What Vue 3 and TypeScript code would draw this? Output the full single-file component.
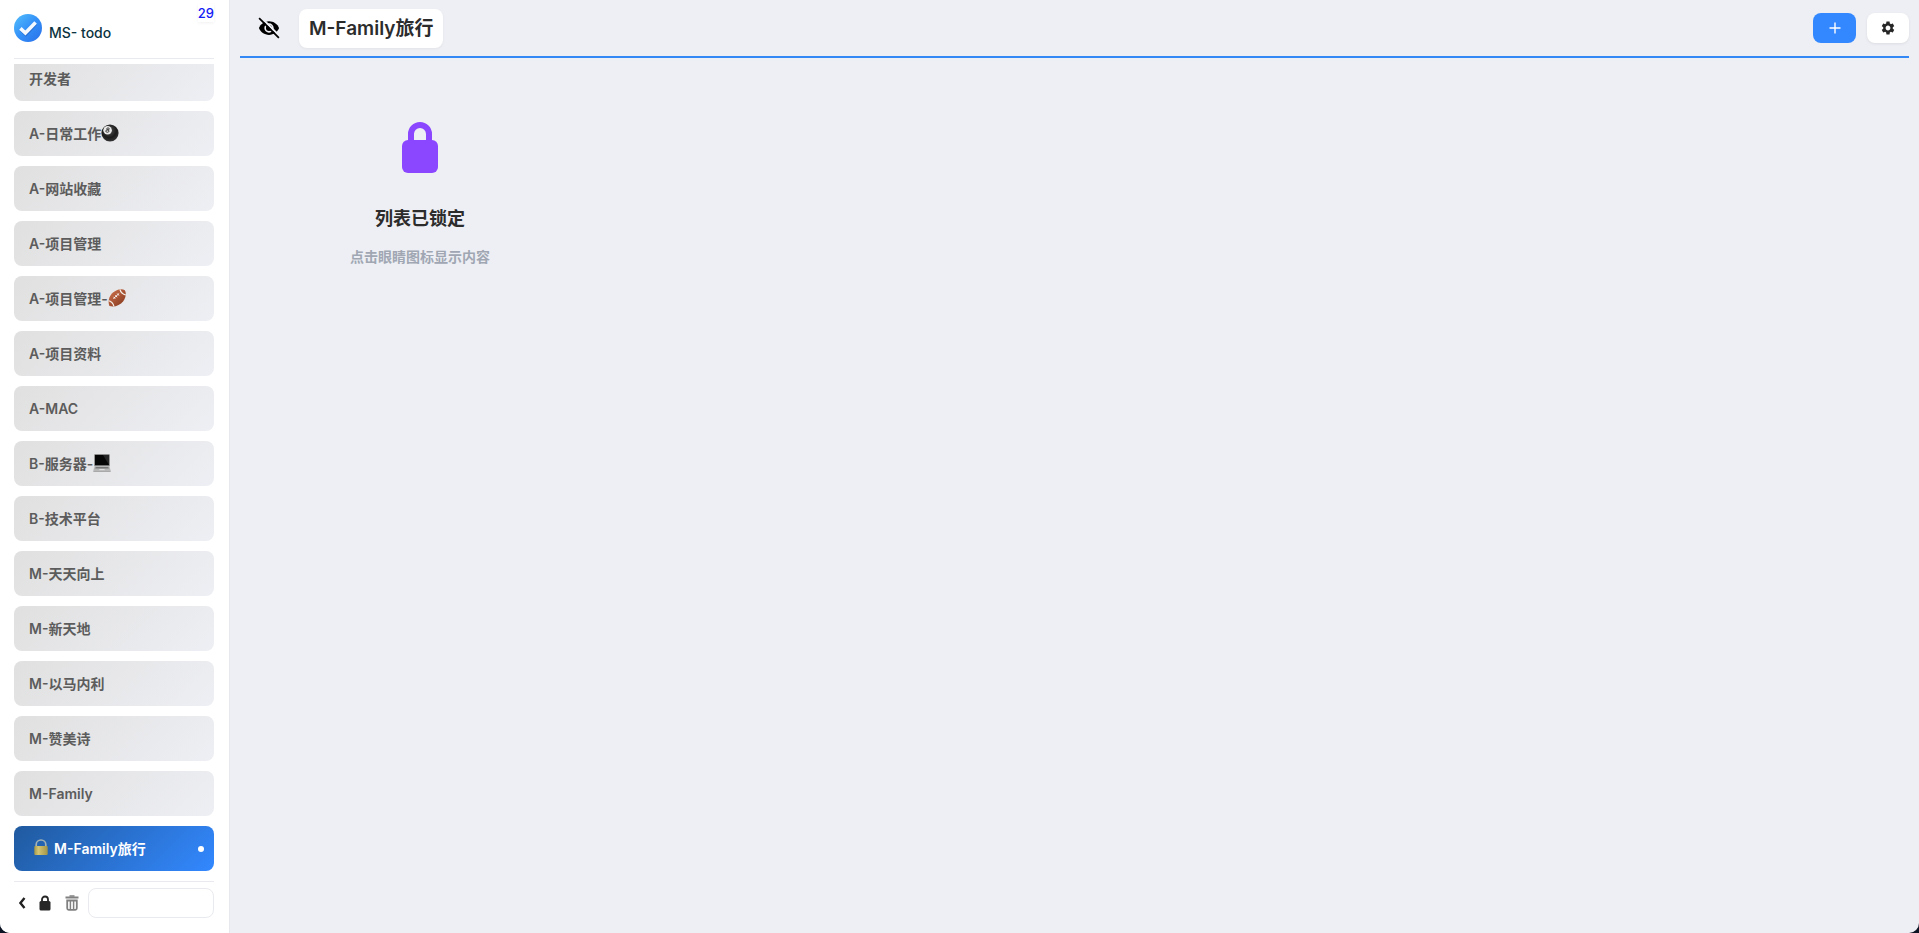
<script setup lang="ts">
import { ref } from 'vue'

interface TodoList {
  name: string
  emoji?: 'ball' | 'football' | 'laptop'
  locked?: boolean
}

const lists: TodoList[] = [
  { name: '开发者' },
  { name: 'A-日常工作', emoji: 'ball' },
  { name: 'A-网站收藏' },
  { name: 'A-项目管理' },
  { name: 'A-项目管理-', emoji: 'football' },
  { name: 'A-项目资料' },
  { name: 'A-MAC' },
  { name: 'B-服务器-', emoji: 'laptop' },
  { name: 'B-技术平台' },
  { name: 'M-天天向上' },
  { name: 'M-新天地' },
  { name: 'M-以马内利' },
  { name: 'M-赞美诗' },
  { name: 'M-Family' },
  { name: 'M-Family旅行', locked: true },
]
const active = ref(lists.length - 1)
const newName = ref('')
</script>

<template>
  <div class="app">
    <aside class="sidebar">
      <header class="brand">
        <svg class="logo" viewBox="0 0 28 28" aria-hidden="true">
          <defs>
            <linearGradient id="logoFill" x1="0" y1="0" x2="1" y2="1">
              <stop offset="0" stop-color="#55c0fb" />
              <stop offset="0.5" stop-color="#3390f8" />
              <stop offset="1" stop-color="#2a6fe8" />
            </linearGradient>
          </defs>
          <circle cx="14" cy="14" r="14" fill="url(#logoFill)" />
          <path d="M7 15.6l4.8 4.6L21.8 9.6" fill="none" stroke="#1c56b4" stroke-opacity=".55" stroke-width="3.6" />
          <path d="M6.400 14.400l5 4.600L21.600 8.400" fill="none" stroke="#f4f8ff" stroke-width="3.6" />
        </svg>
        <span class="brand-name">MS- todo</span>
        <span class="count">29</span>
      </header>

      <nav class="lists">
        <button
          v-for="(item, i) in lists"
          :key="item.name"
          type="button"
          class="list-item"
          :class="{ active: i === active }"
          @click="active = i"
        >
          <svg v-if="item.locked" class="lock-emoji" viewBox="0 0 14 17" aria-hidden="true">
            <defs>
              <linearGradient id="brass" x1="0" x2="1">
                <stop offset="0" stop-color="#a59848" />
                <stop offset="0.3" stop-color="#d3c574" />
                <stop offset="1" stop-color="#a39546" />
              </linearGradient>
            </defs>
            <path d="M2.2 8V5.4a4.8 4.4 0 0 1 9.6 0V8" fill="none" stroke="#a3b2b4" stroke-width="1.7" />
            <rect x=".3" y="7" width="13.4" height="9" rx="1" fill="url(#brass)" />
          </svg>
          <span>{{ item.name }}</span>
          <svg v-if="item.emoji === 'ball'" class="emoji" viewBox="0 0 18 18" aria-hidden="true">
            <defs>
              <radialGradient id="ballFill" cx=".45" cy=".35" r=".7">
                <stop offset="0" stop-color="#555" />
                <stop offset="0.6" stop-color="#1c1c1c" />
                <stop offset="1" stop-color="#3b3b3b" />
              </radialGradient>
            </defs>
            <circle cx="9" cy="9" r="8.6" fill="url(#ballFill)" />
            <circle cx="6.6" cy="6.2" r="4.300" fill="#e8e8e8" />
            <ellipse cx="7" cy="4.900" rx="1.300" ry="1" fill="none" stroke="#333" stroke-width=".9" />
            <ellipse cx="6.400" cy="7.100" rx="1.600" ry="1.200" fill="none" stroke="#333" stroke-width=".9" />
          </svg>
          <svg v-else-if="item.emoji === 'football'" class="emoji" viewBox="0 0 18 18" aria-hidden="true">
            <defs>
              <linearGradient id="leather" x1="0" y1="0" x2="1" y2="1">
                <stop offset="0" stop-color="#d27650" />
                <stop offset="1" stop-color="#80341a" />
              </linearGradient>
              <clipPath id="ballShape">
                <path d="M1.400 17C-1 11 2.200 5 6.500 2.400 10.500 0 14.500-.2 16.800 1.200 18.600 4 18 8.500 15.200 12.200 12 16.400 6.500 18.400 1.400 17z" />
              </clipPath>
            </defs>
            <g clip-path="url(#ballShape)">
              <path d="M0 0h18v18H0z" fill="url(#leather)" />
              <path d="M-.2 11.600c3 .4 5.400 2.600 6.200 6M11.800.2c.8 3 3 5.200 6.200 5.800" fill="none" stroke="#f3ece4" stroke-width="1.300" />
            </g>
            <path d="M5.400 9.600l5.800-5.200M5.500 7.800l1.700 2M7.400 6.200l1.700 2M9.200 4.500l1.700 2" fill="none" stroke="#fff" stroke-width=".9" />
          </svg>
          <svg v-else-if="item.emoji === 'laptop'" class="emoji" viewBox="0 0 18 18" aria-hidden="true">
            <rect x="1.300" y=".3" width="15.400" height="11.700" rx=".6" fill="#727272" />
            <rect x="2" y="1" width="14" height="10" fill="#060606" />
            <path d="M10 1h6v10z" fill="#252525" />
            <path d="M1.600 12h14.800l1.300 4.800H.3z" fill="#b6b6b6" />
            <path d="M2.700 12.900h12.600l.5 1.600H2.200z" fill="#777" />
            <path d="M6.500 15h5l.3 1.200H6.200z" fill="#ddd" />
            <path d="M.3 16.800h17.400v.9H.3z" fill="#8f8f8f" />
          </svg>
          <i v-if="i === active" class="dot"></i>
        </button>
      </nav>

      <footer class="tools">
        <button type="button" class="tool back" aria-label="收起">
          <svg viewBox="0 0 8 12"><path d="M6.500 1L2.400 6l4.100 5" fill="none" stroke="#222" stroke-width="2.400" /></svg>
        </button>
        <button type="button" class="tool lock" aria-label="锁定">
          <svg viewBox="0 0 12 16">
            <path d="M3 7V4.500a3 3 0 0 1 6 0V7" fill="none" stroke="#262626" stroke-width="1.800" />
            <rect x=".5" y="6" width="11" height="9.500" rx="1.500" fill="#262626" />
          </svg>
        </button>
        <button type="button" class="tool trash" aria-label="删除">
          <svg viewBox="0 0 14 16" fill="none" stroke="#808080">
            <path d="M.5 2.500h13" stroke-width="1.800" />
            <path d="M4.500 1h5" stroke-width="1.600" />
            <path d="M2.200 5.500v7.800q0 1.500 1.500 1.500h6.600q1.500 0 1.500-1.500V5.500z" stroke-width="1.800" />
            <path d="M5.400 5v9M8.600 5v9" stroke-width="1.500" />
          </svg>
        </button>
        <input v-model="newName" class="new-list" type="text" aria-label="新建列表" />
      </footer>
    </aside>

    <main class="main">
      <header class="topbar">
        <button type="button" class="eye" aria-label="显示内容">
          <svg viewBox="0 0 24 24">
            <path d="M12 4.500C7 4.500 2.700 7.600 1 12c1.700 4.400 6 7.500 11 7.500s9.300-3.100 11-7.500c-1.700-4.400-6-7.500-11-7.500z" fill="#000" />
            <circle cx="12" cy="12" r="4.200" fill="none" stroke="#eeeff4" stroke-width="1.800" />
            <path d="M3.700.900l20.400 20.400" stroke="#eeeff4" stroke-width="2.200" />
            <path d="M1.200 1.200l21.600 21.600" stroke="#000" stroke-width="1.900" />
          </svg>
        </button>
        <h1 class="title">M-Family旅行</h1>
        <button type="button" class="add" aria-label="添加">
          <svg viewBox="0 0 12 12"><path d="M6 .5v11M.5 6h11" stroke="#fff" stroke-width="1.400" /></svg>
        </button>
        <button type="button" class="settings" aria-label="设置">
          <svg viewBox="0 0 24 24">
            <path fill="#262626" d="M19.140 12.940c.04-.3.060-.61.060-.94s-.02-.64-.07-.94l2.030-1.580c.18-.14.230-.41.120-.61l-1.920-3.320c-.12-.22-.37-.29-.59-.22l-2.390.96c-.5-.38-1.030-.7-1.620-.94l-.36-2.540c-.04-.24-.24-.41-.48-.41h-3.840c-.24 0-.43.170-.47.410l-.36 2.540c-.59.240-1.130.570-1.620.940l-2.390-.96c-.22-.08-.47 0-.59.220L2.740 8.870c-.12.210-.08.470.12.610l2.030 1.580c-.05.3-.09.630-.09.940s.02.640.07.940l-2.030 1.580c-.18.140-.23.410-.12.610l1.920 3.320c.12.220.37.290.59.220l2.390-.96c.5.380 1.030.7 1.620.940l.36 2.540c.05.240.24.410.48.410h3.840c.24 0 .44-.17.470-.41l.36-2.540c.59-.24 1.130-.56 1.620-.94l2.390.96c.22.080.47 0 .59-.22l1.920-3.320c.12-.22.070-.47-.12-.61l-2.010-1.580zM12 15.600c-1.980 0-3.600-1.620-3.600-3.600s1.620-3.600 3.600-3.600 3.600 1.620 3.600 3.600-1.620 3.600-3.600 3.600z" />
          </svg>
        </button>
      </header>

      <section class="locked">
        <svg class="locked-icon" viewBox="0 0 36 51" aria-hidden="true">
          <path d="M9 20V12a9 9 0 0 1 18 0v8" fill="none" stroke="#8b46ff" stroke-width="6" />
          <rect y="18" width="36" height="33" rx="6" fill="#8b46ff" />
        </svg>
        <h2>列表已锁定</h2>
        <p>点击眼睛图标显示内容</p>
      </section>
    </main>
  </div>
</template>

<style>
body {
  background: #0c1322;
}
</style>

<style scoped>
.app {
  display: flex;
  height: 100vh;
  overflow: hidden;
  border-radius: 0 0 10px 10px;
  background: #eeeff4;
  font-family: Inter, "Noto Sans CJK SC", sans-serif;
  font-size: 14px;
}

button {
  padding: 0;
  border: 0;
  background: none;
  font: inherit;
  cursor: pointer;
}

svg {
  display: block;
}

.sidebar {
  display: flex;
  flex-direction: column;
  box-sizing: border-box;
  flex: 0 0 230px;
  min-width: 0;
  padding: 0 15px 15px 14px;
  border-right: 1px solid #e6e8ed;
  background: #fff;
}

.brand {
  display: flex;
  flex: 0 0 58px;
  gap: 7px;
  border-bottom: 1px solid #e9eaef;
}

.logo {
  width: 28px;
  height: 28px;
  margin-top: 14px;
}

.brand-name {
  margin-top: 24px;
  line-height: 18px;
  font-weight: 500;
  color: #0c3440;
}

.count {
  margin: 4px 0 auto auto;
  line-height: 18px;
  font-size: 13px;
  font-weight: 500;
  color: #1420f5;
  box-shadow: 0 1px 3px rgba(0, 0, 0, 0.06);
}

.lists {
  display: flex;
  flex: 1;
  flex-direction: column;
  justify-content: flex-end;
  gap: 10px;
  min-height: 0;
  margin: 5px 0 10px;
  overflow: hidden;
}

.list-item {
  display: flex;
  flex: 0 0 45px;
  align-items: center;
  padding: 0 10px 0 15px;
  border-radius: 8px;
  background: linear-gradient(135deg, #e0e0e0, #eeeff4);
  line-height: 18px;
  font-weight: 600;
  color: #5c5c5c;
}

.list-item.active {
  background: linear-gradient(135deg, #205a9f, #3388ff);
  color: #fff;
}

.emoji {
  width: 18px;
  height: 18px;
  margin-bottom: 2px;
}

.lock-emoji {
  width: 14px;
  height: 17px;
  margin: 0 6px 2px 5px;
}

.dot {
  width: 6px;
  height: 6px;
  margin-left: auto;
  border-radius: 50%;
  background: #fff;
}

.tools {
  display: flex;
  align-items: center;
  padding-top: 6px;
  border-top: 1px solid #e9eaef;
}

.back {
  width: 8px;
  margin-left: 4px;
}

.lock {
  width: 12px;
  margin-left: 13px;
}

.trash {
  width: 14px;
  margin-left: 14px;
}

.new-list {
  box-sizing: border-box;
  flex: 1;
  min-width: 0;
  height: 30px;
  margin-left: 9px;
  padding: 0 8px;
  border: 1px solid #e9eaef;
  border-radius: 8px;
  background: #fff;
  font: inherit;
  outline: none;
}

.main {
  flex: 1;
  min-width: 0;
  padding: 0 10px;
}

.topbar {
  display: flex;
  align-items: center;
  height: 56px;
  border-bottom: 2px solid #3388f6;
}

.eye {
  width: 22px;
  margin: 0 19px 0 18px;
}

.title {
  margin: 0;
  padding: 0 10px;
  border-radius: 8px;
  background: #fff;
  box-shadow: 0 1px 3px rgba(0, 0, 0, 0.05);
  line-height: 39px;
  font-size: 19px;
  font-weight: 600;
  color: #2c2c2c;
}

.add,
.settings {
  display: grid;
  place-items: center;
  height: 30px;
  border-radius: 8px;
}

.add {
  width: 43px;
  margin-left: auto;
  background: #3388ff;
}

.add svg {
  width: 12px;
}

.settings {
  width: 42px;
  margin-left: 11px;
  background: #fff;
  box-shadow: 0 1px 3px rgba(0, 0, 0, 0.08);
}

.settings svg {
  width: 16px;
}

.locked {
  display: flex;
  flex-direction: column;
  align-items: center;
  width: 360px;
  padding-top: 64px;
}

.locked-icon {
  width: 36px;
  height: 51px;
}

.locked h2 {
  margin: 32px 0 0;
  line-height: 28px;
  font-size: 18px;
  font-weight: 600;
  color: #2c2c2c;
}

.locked p {
  margin: 14px 0 0;
  line-height: 20px;
  font-weight: 600;
  color: #a0a7b3;
}
</style>
